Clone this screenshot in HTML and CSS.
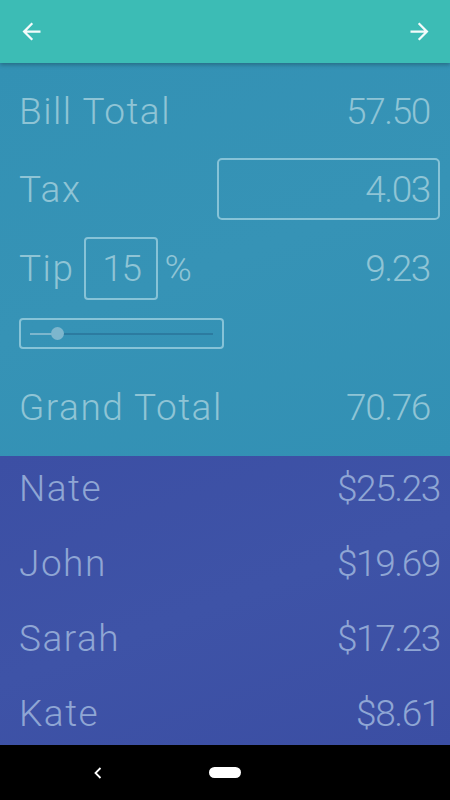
FILE: index.html
```html
<!DOCTYPE html>
<html>
	<head>
		<meta charset="UTF-8">
		<title>Bill Split</title>
		<meta name="viewport" content="width=device-width, initial-scale=1.0">
		<link rel="stylesheet" href="styles.css">
	</head>
	<body>
		<div class="screen">
			<header class="toolbar">
				<svg class="icon" viewBox="0 0 24 24"><path d="M20 11H7.83l5.59-5.59L12 4l-8 8 8 8 1.41-1.41L7.83 13H20v-2z"/></svg>
				<svg class="icon" viewBox="0 0 24 24"><path d="M4 11h12.17l-5.59-5.59L12 4l8 8-8 8-1.41-1.41L16.17 13H4v-2z"/></svg>
			</header>
			<section class="bill">
				<div class="row first">
					<span class="label">Bill Total</span>
					<span class="value">57.50</span>
				</div>
				<div class="row tax">
					<span class="label">Tax</span>
					<div class="field"><span class="num">4.03</span></div>
				</div>
				<div class="row tip">
					<div class="tip-left">
						<span class="label">Tip</span>
						<div class="pct"><span class="num">15</span></div>
						<span>%</span>
					</div>
					<span class="value">9.23</span>
				</div>
				<div class="slider">
					<div class="track">
						<div class="fill" style="width: 15%"></div>
						<div class="thumb"></div>
					</div>
				</div>
				<div class="row grand">
					<span class="label">Grand Total</span>
					<span class="value">70.76</span>
				</div>
			</section>
			<section class="people">
				<div class="person"><span class="label">Nate</span><span class="num">$25.23</span></div>
				<div class="person"><span class="label">John</span><span class="num">$19.69</span></div>
				<div class="person"><span class="label">Sarah</span><span class="num">$17.23</span></div>
				<div class="person"><span class="label">Kate</span><span class="num">$8.61</span></div>
			</section>
			<nav class="navbar">
				<svg class="back" viewBox="0 0 8 12"><path d="M6.5 1 L1.5 6 L6.5 11" fill="none" stroke="#fff" stroke-width="1.8"/></svg>
				<div class="home"></div>
			</nav>
		</div>
	</body>
</html>
```

FILE: styles.css
```css
html, body {
	margin: 0;
	padding: 0;
}
body {
	font-family: Roboto, "Liberation Sans", sans-serif;
	font-weight: 300;
	background: #000;
}
.screen {
	width: 450px;
	height: 800px;
	display: flex;
	flex-direction: column;
	overflow: hidden;
}
.toolbar {
	height: 63px;
	flex: none;
	display: flex;
	align-items: center;
	justify-content: space-between;
	padding: 0 17px 0 18px;
	background: #3cbcb5;
	box-shadow: 0 2px 4px rgba(0, 0, 0, 0.25);
	position: relative;
	z-index: 1;
}
.icon {
	width: 27px;
	height: 27px;
	fill: #f4fbfb;
}
.label {
	letter-spacing: 1.5px;
}
.num, .value {
	letter-spacing: -1.4px;
}
.bill {
	height: 393px;
	flex: none;
	box-sizing: border-box;
	padding: 17px 10px 0 19px;
	background: linear-gradient(160deg, #3391b4 0%, #3693b6 50%, #3290b4 100%);
	color: #8fc4d5;
	font-size: 37px;
}
.row {
	display: flex;
	align-items: center;
	justify-content: space-between;
	height: 62px;
}
.value {
	padding-right: 10px;
}
.tax {
	margin-top: 16px;
}
.field {
	width: 223px;
	height: 62px;
	box-sizing: border-box;
	border: 2px solid rgba(170, 215, 230, 0.7);
	border-radius: 5px;
	display: flex;
	align-items: center;
	justify-content: flex-end;
	padding-right: 8px;
}
.tip {
	margin-top: 17px;
	height: 63px;
}
.tip-left {
	display: flex;
	align-items: center;
	height: 100%;
}
.pct {
	width: 74px;
	height: 63px;
	box-sizing: border-box;
	margin: 0 6px 0 10px;
	border: 2px solid rgba(170, 215, 230, 0.7);
	border-radius: 4px;
	display: flex;
	align-items: center;
	justify-content: center;
}
.slider {
	margin-top: 18px;
	width: 205px;
	height: 31px;
	box-sizing: border-box;
	border: 2px solid rgba(170, 215, 230, 0.7);
	border-radius: 4px;
	display: flex;
	align-items: center;
	padding: 0 9px;
}
.track {
	flex: 1;
	height: 2px;
	background: #2c7ba0;
	position: relative;
}
.fill {
	height: 100%;
	background: #7db6cd;
}
.thumb {
	position: absolute;
	left: 15%;
	top: 50%;
	width: 13px;
	height: 13px;
	margin: -6.5px 0 0 -6.5px;
	border-radius: 50%;
	background: #7db6cd;
}
.grand {
	margin-top: 27px;
}
.people {
	flex: 1;
	display: flex;
	flex-direction: column;
	gap: 11px;
	padding: 0 10px 0 19px;
	background: linear-gradient(160deg, #3c4fa4 0%, #3e53a7 50%, #3b4ea3 100%);
	color: #8fa6d4;
	font-size: 37px;
}
.person {
	height: 64px;
	display: flex;
	align-items: center;
	justify-content: space-between;
}
.navbar {
	height: 55px;
	flex: none;
	background: #000;
	display: flex;
	align-items: center;
	padding-left: 94px;
}
.back {
	width: 8px;
	height: 12px;
}
.home {
	width: 32px;
	height: 11px;
	margin-left: 107px;
	border-radius: 6px;
	background: #fff;
}
```
